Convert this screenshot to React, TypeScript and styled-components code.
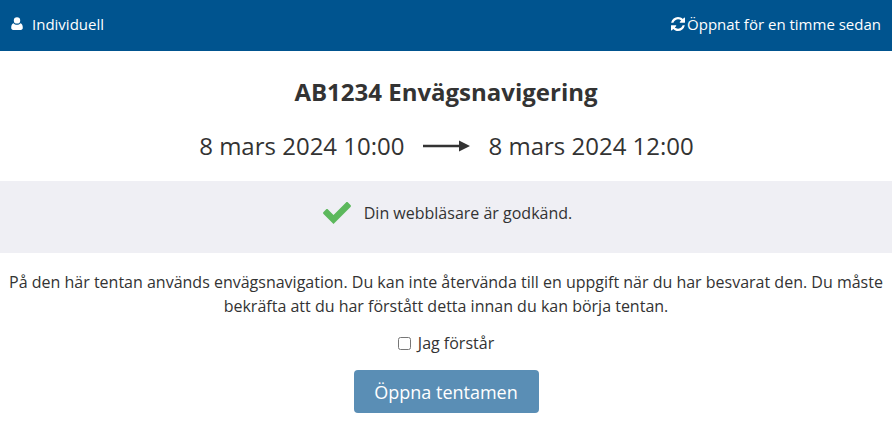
import React from "react";
import styled, { createGlobalStyle } from "styled-components";

const GlobalStyle = createGlobalStyle`
  html, body {
    margin: 0;
    background: #fff;
  }
  body {
    font-family: "Open Sans", "Liberation Sans", sans-serif;
    font-size: 16px;
    color: #333;
  }
`;

function UserIcon() {
  return (
    <svg width="12" height="13" viewBox="0 0 12 13" fill="#fff">
      <circle cx="6" cy="3.4" r="3.2" />
      <path d="M2.6 6.200C3.400 7.200 4.600 7.800 6 7.800s2.600-.6 3.400-1.600c1.600.3 2.400 2 2.400 4.600 0 1.300-.8 2.200-2 2.200H2.200c-1.200 0-2-.9-2-2.200 0-2.600.8-4.300 2.400-4.600z" />
    </svg>
  );
}

function RefreshIcon() {
  return (
    <svg width="14" height="14" viewBox="0 0 1536 1536" fill="#fff">
      <path d="M1511 928q0 5-1 7-64 268-268 434.5T764 1536q-146 0-282.500-55T238 1324l-129 129q-19 19-45 19t-45-19-19-45V960q0-26 19-45t45-19h448q26 0 45 19t19 45-19 45l-137 137q71 66 161 102t187 36q134 0 250-65t186-179q11-17 53-117 8-23 30-23h192q13 0 22.500 9.500t9.500 22.500zm25-800v448q0 26-19 45t-45 19h-448q-26 0-45-19t-19-45 19-45l138-138Q969 256 768 256q-134 0-250 65T332 500q-11 17-53 117-8 23-30 23H50q-13 0-22.500-9.500T18 608v-7q65-268 270-434.500T768 0q146 0 284 55.500T1297 212l130-129q19-19 45-19t45 19 19 45z" />
    </svg>
  );
}

function CheckIcon() {
  return (
    <svg width="28" height="22" viewBox="0 0 28 22" fill="#5cb85c">
      <path d="M10.500 22 .5 12c-.6-.6-.6-1.400 0-2L3 7.500c.6-.6 1.400-.6 2 0l5.500 5.500L23 .5c.6-.6 1.400-.6 2 0L27.500 3c.6.6.6 1.400 0 2z" />
    </svg>
  );
}

function ArrowIcon() {
  return (
    <svg width="48" height="12" viewBox="0 0 48 12" fill="#333">
      <path d="M0 4.800h36V.5L47 6 36 11.500V7.200H0z" />
    </svg>
  );
}

export default function App() {
  return (
    <>
      <GlobalStyle />
      <Page>
        <TopBar>
          <TopLabel>
            <UserIcon />
            Individuell
          </TopLabel>
          <OpenedLabel>
            <RefreshIcon />
            Öppnat för en timme sedan
          </OpenedLabel>
        </TopBar>
        <Title>AB1234 Envägsnavigering</Title>
        <TimeRow>
          <span>8 mars 2024 10:00</span>
          <ArrowIcon />
          <span>8 mars 2024 12:00</span>
        </TimeRow>
        <BrowserCheck>
          <CheckIcon />
          Din webbläsare är godkänd.
        </BrowserCheck>
        <Notice>
          På den här tentan används envägsnavigation. Du kan inte återvända till
          en uppgift när du har besvarat den. Du måste bekräfta att du har
          förstått detta innan du kan börja tentan.
        </Notice>
        <ConfirmLabel>
          <ConfirmBox type="checkbox" />
          Jag förstår
        </ConfirmLabel>
        <ButtonRow>
          <OpenButton type="button">Öppna tentamen</OpenButton>
        </ButtonRow>
      </Page>
    </>
  );
}

const Page = styled.div`
  width: 892px;
  height: 422px;
  overflow: hidden;
`;

const TopBar = styled.header`
  height: 51px;
  box-sizing: border-box;
  padding: 0 11px 4px;
  background: #00548f;
  color: #fff;
  font-size: 15px;
  display: flex;
  align-items: center;
  justify-content: space-between;
`;

const TopLabel = styled.div`
  display: flex;
  align-items: center;
  gap: 9px;
`;

const OpenedLabel = styled.div`
  display: flex;
  align-items: center;
  gap: 2px;
`;

const Title = styled.h1`
  margin: 0;
  padding-top: 23px;
  font-size: 24px;
  line-height: 36px;
  font-weight: 700;
  text-align: center;
  color: #333;
`;

const TimeRow = styled.div`
  margin-top: 18px;
  padding-left: 1px;
  height: 36px;
  display: flex;
  align-items: center;
  justify-content: center;
  gap: 18px;
  font-size: 24px;
  line-height: 36px;
`;

const BrowserCheck = styled.div`
  margin-top: 17px;
  height: 72px;
  box-sizing: border-box;
  padding: 0 0 8px 3px;
  background: #efeff4;
  display: flex;
  align-items: center;
  justify-content: center;
  gap: 13px;
`;

const Notice = styled.p`
  margin: 17px 0 0;
  padding: 0 8px;
  line-height: 24px;
  text-align: center;
`;

const ConfirmLabel = styled.label`
  margin-top: 13px;
  display: flex;
  align-items: center;
  justify-content: center;
  gap: 7px;
  line-height: 24px;
`;

const ConfirmBox = styled.input`
  margin: 0;
  width: 13px;
  height: 13px;
`;

const ButtonRow = styled.div`
  margin-top: 15px;
  display: flex;
  justify-content: center;
`;

const OpenButton = styled.button`
  width: 185px;
  height: 43px;
  border: none;
  border-radius: 4px;
  background: #5a8eb5;
  color: #fff;
  font-family: inherit;
  font-size: 18px;
  font-weight: 500;
`;
